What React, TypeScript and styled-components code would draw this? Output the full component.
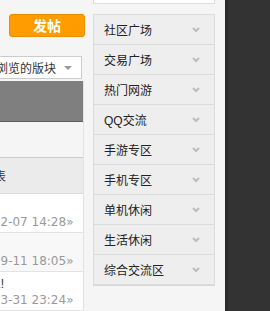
import React from 'react';
import styled, { createGlobalStyle } from 'styled-components';

const GlobalStyle = createGlobalStyle`
  html, body {
    margin: 0;
    padding: 0;
    background: #f5f5f5;
    overflow: hidden;
    font-family: "Liberation Sans", "Noto Sans CJK SC", sans-serif;
  }
`;

const Page = styled.div`
  display: flex;
  width: 270px;
  height: 311px;
  overflow: hidden;
`;

const Main = styled.div`
  width: 85px;
  flex: none;
  overflow: hidden;
  display: flex;
  flex-direction: column;
  align-items: flex-end;
`;

const Toolbar = styled.div`
  width: 700px;
  height: 81px;
  flex: none;
  display: flex;
  flex-direction: column;
  align-items: flex-end;
  padding-top: 14px;
  box-sizing: border-box;
`;

const PostButton = styled.button`
  width: 76px;
  height: 23px;
  background: #ff9d00;
  border: 1px solid #ec8c00;
  border-radius: 3px;
  color: #fff;
  font-family: "Noto Sans CJK SC", sans-serif;
  font-size: 14px;
  font-weight: bold;
  padding: 0;
  line-height: 21px;
`;

const SelectBox = styled.div`
  margin-top: 19px;
  margin-right: 3px;
  width: 220px;
  height: 23px;
  box-sizing: border-box;
  background: #fff;
  border: 1px solid #ccc;
  display: flex;
  align-items: center;
  justify-content: flex-end;
  padding-right: 9px;
  gap: 8px;
  font-size: 12px;
  color: #333;
`;

const Caret = styled.span`
  width: 0;
  height: 0;
  border-left: 4px solid transparent;
  border-right: 4px solid transparent;
  border-top: 4px solid #999;
  margin-top: 1px;
`;

const Table = styled.div`
  width: 700px;
  flex: none;
  margin-right: 1px;
  border-right: 1px solid #e2e2e2;
  box-sizing: border-box;
`;

const TitleBar = styled.div`
  height: 40px;
  background: #7f7f7f;
  border-bottom: 1px solid #5e5e5e;
`;

const TabRow = styled.div`
  height: 35px;
  background: #f5f5f5;
  border-bottom: 1px solid #cbcbcb;
`;

const HeadRow = styled.div`
  height: 35px;
  background: #ebebeb;
  border-bottom: 1px solid #dcdcdc;
  display: flex;
  align-items: center;
  justify-content: flex-end;
  font-size: 12px;
  color: #333;
`;

const HeadCell = styled.div<{ $w: number }>`
  width: ${(p) => p.$w}px;
  flex: none;
`;

const ThreadRow = styled.div<{ $alt?: boolean }>`
  height: 38px;
  background: ${(p) => (p.$alt ? '#f8f8f8' : '#fff')};
  border-bottom: 1px solid #e3e3e3;
  display: flex;
  justify-content: flex-end;
`;

const LastCell = styled.div`
  width: 135px;
  flex: none;
  box-sizing: border-box;
  padding: 4px 0 0 10px;
  font-size: 12px;
  line-height: 16px;
  white-space: nowrap;
`;

const Author = styled.div`
  color: #333;
`;

const PostDate = styled.div`
  color: #999;
  font-family: "DejaVu Sans", sans-serif;
`;

const Sidebar = styled.div`
  width: 122px;
  flex: none;
  margin-left: 8px;
`;

const TopBox = styled.div`
  height: 3px;
  background: #fff;
  border: 1px solid #ddd;
  border-top: none;
`;

const NavList = styled.div`
  margin-top: 10px;
  border: 1px solid #dcdcdc;
  border-bottom: none;
  box-shadow: 0 1px 0 #d6d6d6;
`;

const NavItem = styled.div`
  height: 29px;
  background: #eeeeee;
  border-bottom: 1px solid #dcdcdc;
  display: flex;
  align-items: center;
  justify-content: space-between;
  padding: 0 14px 0 10px;
  font-size: 12px;
  color: #222;
`;

const Dark = styled.div`
  flex: 1;
  margin-left: 10px;
  background: #333;
  border-left: 3px solid #2b2b2b;
`;

const Chevron = () => (
  <svg width="8" height="6" viewBox="0 0 8 6">
    <polyline points="1,1 4,4 7,1" fill="none" stroke="#bdbdbd" strokeWidth="2" />
  </svg>
);

const threads = [
  { author: '小明', date: '2013-12-07 14:28»' },
  { author: '风之子', date: '2014-09-11 18:05»', alt: true },
  { author: '路人甲1!', date: '2015-03-31 23:24»' },
];

const forums = ['社区广场', '交易广场', '热门网游', 'QQ交流', '手游专区', '手机专区', '单机休闲', '生活休闲', '综合交流区'];

export default function App() {
  return (
    <Page>
      <GlobalStyle />
      <Main>
        <Toolbar>
          <PostButton>发帖</PostButton>
          <SelectBox>
            <span>选择要浏览的版块</span>
            <Caret />
          </SelectBox>
        </Toolbar>
        <Table>
          <TitleBar />
          <TabRow />
          <HeadRow>
            <HeadCell $w={80}>回复/查看</HeadCell>
            <HeadCell $w={125}>最后发表</HeadCell>
          </HeadRow>
          {threads.map((t) => (
            <ThreadRow key={t.date} $alt={t.alt}>
              <LastCell>
                <Author>{t.author}</Author>
                <PostDate>{t.date}</PostDate>
              </LastCell>
            </ThreadRow>
          ))}
        </Table>
      </Main>
      <Sidebar>
        <TopBox />
        <NavList>
          {forums.map((f) => (
            <NavItem key={f}>
              <span>{f}</span>
              <Chevron />
            </NavItem>
          ))}
        </NavList>
      </Sidebar>
      <Dark />
    </Page>
  );
}
